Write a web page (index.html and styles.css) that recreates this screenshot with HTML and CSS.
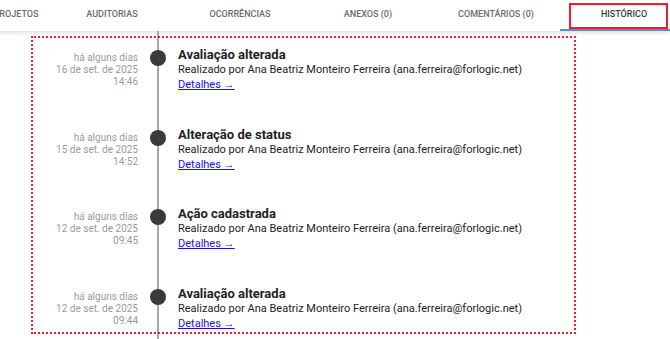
FILE: index.html
```html
<!DOCTYPE html>
<html lang="pt-BR">

<head>
    <meta charset="UTF-8">
    <meta name="viewport" content="width=device-width, initial-scale=1.0">
    <title>Histórico</title>
    <link rel="stylesheet" href="styles.css">
</head>

<body>
    <!-- Tabs -->
    <div class="tabs">
        <div class="tab tab-narrow">Projetos</div>
        <div class="tab">Auditorias</div>
        <div class="tab">Ocorrências</div>
        <div class="tab">Anexos (0)</div>
        <div class="tab">Comentários (0)</div>
        <div class="tab active">
            Histórico
            <span class="highlight"></span>
        </div>
    </div>

    <!-- Timeline -->
    <div class="timeline">
        <div class="history-box">
            <div class="event">
                <div class="event-date">
                    <div>há alguns dias</div>
                    <div>16 de set. de 2025</div>
                    <div>14:46</div>
                </div>
                <div class="event-dot"></div>
                <div class="event-body">
                    <h3>Avaliação alterada</h3>
                    <p>Realizado por Ana Beatriz Monteiro Ferreira (ana.ferreira@forlogic.net)</p>
                    <a href="#">Detalhes →</a>
                </div>
            </div>
            <div class="event">
                <div class="event-date">
                    <div>há alguns dias</div>
                    <div>15 de set. de 2025</div>
                    <div>14:52</div>
                </div>
                <div class="event-dot"></div>
                <div class="event-body">
                    <h3>Alteração de status</h3>
                    <p>Realizado por Ana Beatriz Monteiro Ferreira (ana.ferreira@forlogic.net)</p>
                    <a href="#">Detalhes →</a>
                </div>
            </div>
            <div class="event">
                <div class="event-date">
                    <div>há alguns dias</div>
                    <div>12 de set. de 2025</div>
                    <div>09:45</div>
                </div>
                <div class="event-dot"></div>
                <div class="event-body">
                    <h3>Ação cadastrada</h3>
                    <p>Realizado por Ana Beatriz Monteiro Ferreira (ana.ferreira@forlogic.net)</p>
                    <a href="#">Detalhes →</a>
                </div>
            </div>
            <div class="event">
                <div class="event-date">
                    <div>há alguns dias</div>
                    <div>12 de set. de 2025</div>
                    <div>09:44</div>
                </div>
                <div class="event-dot"></div>
                <div class="event-body">
                    <h3>Avaliação alterada</h3>
                    <p>Realizado por Ana Beatriz Monteiro Ferreira (ana.ferreira@forlogic.net)</p>
                    <a href="#">Detalhes →</a>
                </div>
            </div>
        </div>
    </div>
</body>

</html>
```

FILE: styles.css
```css
* {
    margin: 0;
    padding: 0;
    box-sizing: border-box;
    font-family: Roboto, "Liberation Sans", sans-serif;
}

body {
    background-color: white;
    overflow: hidden;
}

.tabs {
    display: flex;
    height: 31px;
    margin-left: -16px;
    background-color: white;
    box-shadow: 0 2px 4px rgba(0, 0, 0, 0.12);
}

.tab {
    flex: 0 0 128px;
    display: flex;
    align-items: center;
    justify-content: center;
    padding-bottom: 4px;
    font-size: 9px;
    font-weight: 500;
    text-transform: uppercase;
    color: #6b6b6b;
    position: relative;
}

.tab-narrow {
    flex-basis: 64px;
}

.tab.active {
    color: #3a3a3a;
    border-bottom: 2px solid #5b8fc7;
    padding-bottom: 2px;
}

.tab .highlight {
    position: absolute;
    left: 9px;
    top: 3px;
    width: 99px;
    height: 26px;
    border: 2px solid #ee1c2e;
}

.timeline {
    padding-top: 5px;
    background: linear-gradient(#a8a8a8, #a8a8a8) no-repeat 157px 0 / 2px 100%;
    height: 308px;
}

.history-box {
    margin-left: 31px;
    width: 545px;
    height: 298px;
    border: 2px dotted #ee1c2e;
    padding-top: 8px;
}

.event {
    display: flex;
    height: 79.5px;
}

.event:last-child {
    height: auto;
}

.event-date {
    width: 105px;
    padding-top: 6px;
    text-align: right;
    font-size: 10px;
    line-height: 12px;
    color: #9a9a9a;
}

.event-dot {
    width: 16px;
    height: 16px;
    margin: 4px 0 0 12px;
    border-radius: 50%;
    background-color: #3a3a3a;
}

.event-body {
    padding: 2px 0 0 12px;
    color: #222;
}

.event-body h3 {
    font-size: 13px;
    font-weight: 700;
    line-height: 14px;
}

.event-body p {
    font-size: 11px;
    line-height: 15px;
}

.event-body a {
    display: block;
    font-size: 11px;
    line-height: 15px;
    color: #1a0dee;
}
```
